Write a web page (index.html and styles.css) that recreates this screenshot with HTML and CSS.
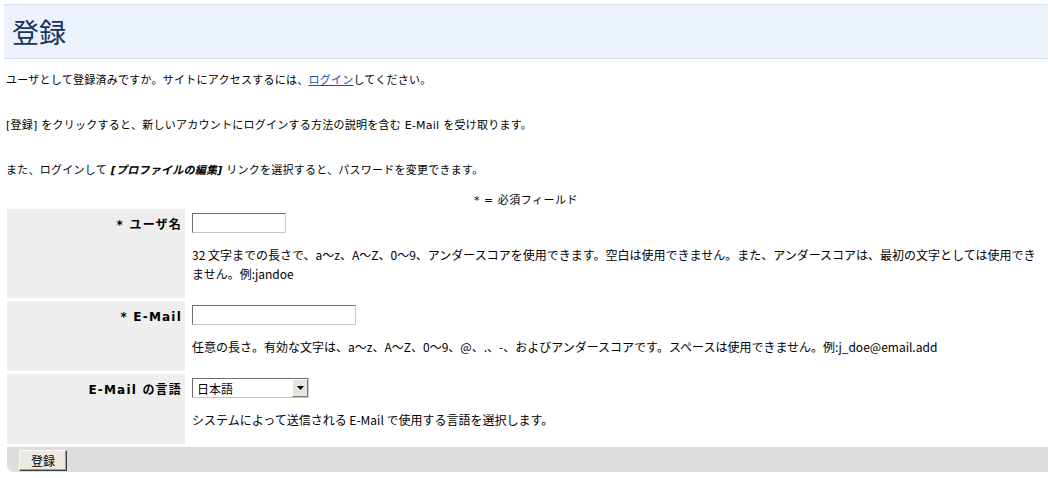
FILE: index.html
```html
<!DOCTYPE html>
<html lang="ja">
<head>
<meta charset="utf-8">
<title>登録</title>
<link rel="stylesheet" href="styles.css">
</head>
<body>
<div class="header"><h1 class="title">登録</h1></div>
<p class="intro first">ユーザとして登録済みですか。サイトにアクセスするには、<a class="link" href="#">ログイン</a>してください。</p>
<p class="intro">[登録] をクリックすると、新しいアカウントにログインする方法の説明を含む E-Mail を受け取ります。</p>
<p class="intro">また、ログインして <em class="em">[プロファイルの編集]</em> リンクを選択すると、パスワードを変更できます。</p>
<p class="required">* = 必須フィールド</p>
<div class="form">
  <div class="label">* ユーザ名</div>
  <div class="field">
    <input class="text short" type="text">
    <div class="help">32 文字までの長さで、a～z、A～Z、0～9、アンダースコアを使用できます。空白は使用できません。また、アンダースコアは、最初の文字としては使用できません。例:jandoe</div>
  </div>
  <div class="label">* E-Mail</div>
  <div class="field">
    <input class="text long" type="text">
    <div class="help">任意の長さ。有効な文字は、a～z、A～Z、0～9、@、.、-、およびアンダースコアです。スペースは使用できません。例:j_doe@email.add</div>
  </div>
  <div class="label">E-Mail の言語</div>
  <div class="field">
    <span class="selectwrap">
      <select class="select"><option>日本語</option></select>
      <span class="arrow"><svg width="7" height="4" viewBox="0 0 7 4"><path d="M0 0h7L3.5 4z" fill="#000"/></svg></span>
    </span>
    <div class="help">システムによって送信される E-Mail で使用する言語を選択します。</div>
  </div>
  <div class="footer"><button class="btn" type="button">登録</button></div>
</div>
</body>
</html>
```
FILE: styles.css
```css
body {
  margin: 4px 4px 0 4px;
  font-family: "DejaVu Sans", "Noto Sans CJK JP", sans-serif;
  font-size: 11px;
  color: #000;
  background: #fff;
}
.header {
  background: #ebf2fc;
  border-top: 1px solid #d6dff0;
  border-bottom: 1px solid #d6dff0;
  height: 53px;
  display: flex;
  align-items: center;
  padding-left: 8px;
}
.title {
  margin: 0;
  font-family: "Noto Sans CJK JP", sans-serif;
  font-size: 27px;
  font-weight: normal;
  color: #17325f;
  line-height: 1;
}
.intro {
  margin: 0;
  padding-left: 2px;
  line-height: 15px;
  font-family: "DejaVu Sans", "Noto Sans CJK JP", sans-serif;
  letter-spacing: 0.25px;
  height: 15px;
  margin-bottom: 30px;
}
.intro.first {
  margin-top: 14px;
}
.link {
  color: #1a4ea3;
  text-decoration: underline;
}
.em {
  font-style: italic;
  font-weight: bold;
}
.required {
  margin: -15px 0 0 0;
  text-align: center;
  line-height: 15px;
  letter-spacing: 0.5px;
  font-family: "DejaVu Sans", "Noto Sans CJK JP", sans-serif;
}
.form {
  margin: 1px 0 0 3px;
  display: grid;
  grid-template-columns: 178px 1fr;
  row-gap: 3px;
}
.label {
  background: #eeeeee;
  text-align: right;
  font-weight: bold;
  font-size: 12px;
  padding: 6px 3px 0 0;
  line-height: 20px;
  letter-spacing: 1.2px;
  font-family: "DejaVu Sans", "Noto Sans CJK JP", sans-serif;
}
.field {
  padding: 4px 4px 15px 7px;
  font-family: "Noto Sans CJK JP", sans-serif;
}
.text {
  display: block;
  box-sizing: border-box;
  height: 20px;
  margin: 0;
  padding: 1px 3px;
  border: 1px solid;
  border-color: #6e6e6e #c6c6c6 #c6c6c6 #6e6e6e;
  background: #fff;
  font-size: 11px;
}
.short { width: 94px; }
.long { width: 164px; }
.help {
  margin-top: 12px;
  font-size: 12px;
  line-height: 19px;
}
.selectwrap {
  position: relative;
  display: block;
  width: 117px;
  height: 20px;
}
.select {
  appearance: none;
  -webkit-appearance: none;
  box-sizing: border-box;
  width: 117px;
  height: 20px;
  margin: 0;
  padding: 0 0 0 4px;
  border: 1px solid;
  border-color: #6e6e6e #c6c6c6 #c6c6c6 #6e6e6e;
  border-radius: 0;
  background: #fff;
  font-family: "Noto Sans CJK JP", sans-serif;
  font-size: 12px;
  color: #000;
}
.arrow {
  position: absolute;
  right: 1px;
  top: 1px;
  width: 16px;
  height: 18px;
  box-sizing: border-box;
  background: #e6e4dc;
  border: 1px solid;
  border-color: #fff #7a7a7a #7a7a7a #fff;
  display: flex;
  align-items: center;
  justify-content: center;
}
.footer {
  grid-column: 1 / 3;
  background: #dddddd;
  height: 25px;
  border-bottom-left-radius: 7px;
  padding: 3px 0 0 12px;
  box-sizing: border-box;
}
.btn {
  display: block;
  width: 48px;
  height: 21px;
  margin: 0;
  padding: 0;
  background: #ece9e0;
  border: 1px solid;
  border-color: #f8f8f8 #404040 #404040 #f8f8f8;
  box-shadow: inset -1px -1px 0 #9a9a9a;
  font-family: "Noto Sans CJK JP", sans-serif;
  font-size: 12px;
  color: #000;
}
```
